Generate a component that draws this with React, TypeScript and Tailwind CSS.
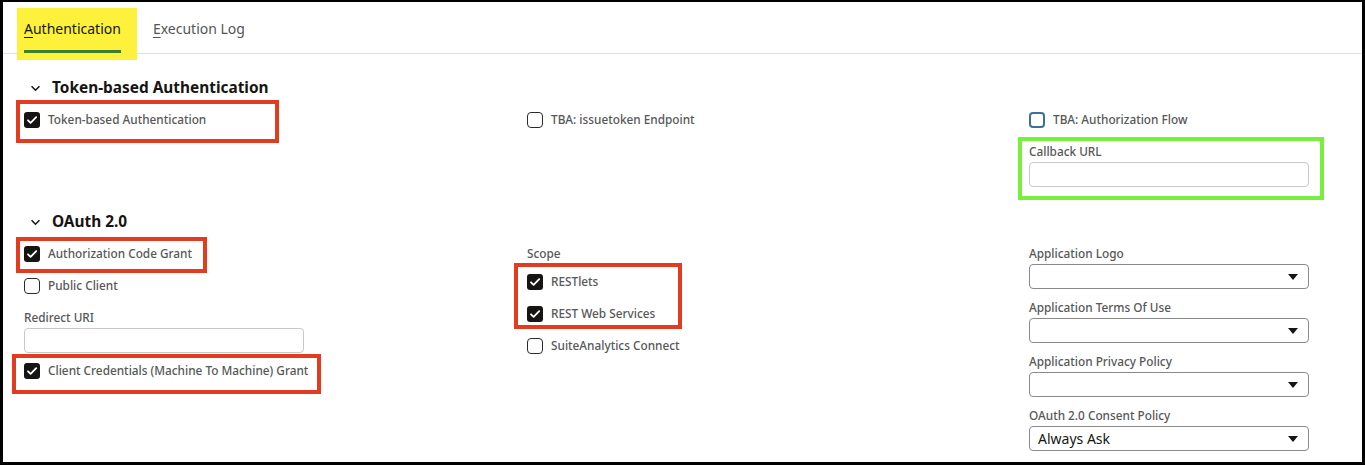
import type { ReactNode } from "react";

const Check = () => (
  <svg viewBox="0 0 16 16" className="w-[16px] h-[16px]">
    <rect x="0" y="0" width="16" height="16" rx="3" fill="#161513" />
    <path d="M4 8.3l2.6 2.6L12.2 5.2" fill="none" stroke="#fff" strokeWidth="1.8" strokeLinecap="round" strokeLinejoin="round" />
  </svg>
);

const Box = ({ checked, focus }: { checked?: boolean; focus?: boolean }) =>
  checked ? (
    <Check />
  ) : (
    <span
      className={
        focus
          ? "block w-[16px] h-[16px] rounded-[4px] border-[2px] border-[#3e7294]"
          : "block w-[16px] h-[16px] rounded-[4px] border-[1.5px] border-[#2a2a2a]"
      }
    />
  );

const CheckRow = ({ label, checked, focus, children }: { label: string; checked?: boolean; focus?: boolean; children?: ReactNode }) => (
  <div className="relative flex items-center h-[32px] gap-[8px]">
    <Box checked={checked} focus={focus} />
    <span className="text-[11.8px] text-[#575757] font-medium">{label}</span>
    {children}
  </div>
);

const Label = ({ children, className = "" }: { children: ReactNode; className?: string }) => (
  <div className={"h-[16px] leading-[16px] text-[11.8px] text-[#575757] font-medium " + className}>{children}</div>
);

const TextInput = () => <div className="w-[280px] h-[25px] rounded-[4px] border border-[#c9c9c9] mt-[3px]" />;

const Select = ({ value }: { value?: string }) => (
  <div className="w-[280px] h-[25px] rounded-[4px] border border-[#8a8a8a] mt-[3px] flex items-center justify-between pl-[8px] pr-[10px]">
    <span className="text-[14px] text-[#161513]">{value}</span>
    <svg viewBox="0 0 10 6" className="w-[10px] h-[6px]">
      <path d="M0 0h10L5 6z" fill="#161513" />
    </svg>
  </div>
);

const Chevron = () => (
  <svg viewBox="0 0 12 8" className="w-[11px] h-[7px]">
    <path d="M1.5 1.5L6 6l4.5-4.5" fill="none" stroke="#161513" strokeWidth="1.8" />
  </svg>
);

const Section = ({ title, className = "" }: { title: string; className?: string }) => (
  <div className={"flex items-center h-[24px] " + className}>
    <span className="ml-[6px] w-[22px] flex"><Chevron /></span>
    <span className="text-[15.4px] font-bold text-[#161513]">{title}</span>
  </div>
);

export default function App() {
  return (
    <div className="w-[1365px] h-[465px] bg-black pt-[2px] px-[3px] pb-[3px] font-['Noto_Sans',sans-serif]">
      <div className="bg-white h-full relative">
        <div className="flex h-[52px] border-b border-[#e0e0e0] pl-[21px] gap-[32px]">
          <div className="relative flex flex-col justify-center">
            <div className="absolute left-[-7px] top-[6px] w-[120px] h-[52px] bg-[#fdf13b]" />
            <span className="relative text-[14px] text-[#161513] mt-[2px]">
              <span className="underline underline-offset-[3px]">A</span>uthentication
            </span>
            <div className="absolute left-0 right-0 bottom-0 h-[3px] bg-[#3d7e2e]" />
          </div>
          <div className="flex flex-col justify-center">
            <span className="text-[14px] text-[#555555] mt-[2px]">
              <span className="underline underline-offset-[3px]">E</span>xecution Log
            </span>
          </div>
        </div>

        <div className="pl-[21px]">
          <Section title="Token-based Authentication" className="mt-[22px]" />
          <div className="grid grid-cols-[503px_502px_1fr] mt-[4px]">
            <div>
              <CheckRow label="Token-based Authentication" checked>
                <div className="absolute left-[-8px] top-[-4px] w-[263px] h-[43px] border-[4px] border-[#e33b1f]" />
              </CheckRow>
            </div>
            <div>
              <CheckRow label="TBA: issuetoken Endpoint" />
            </div>
            <div className="relative">
              <CheckRow label="TBA: Authorization Flow" focus />
              <Label className="mt-[7px]">Callback URL</Label>
              <TextInput />
              <div className="absolute left-[-11px] top-[33px] w-[306px] h-[63px] border-[4px] border-[#77f03d]" />
            </div>
          </div>

          <Section title="OAuth 2.0" className="mt-[23px]" />
          <div className="grid grid-cols-[503px_502px_1fr] mt-[4px]">
            <div>
              <CheckRow label="Authorization Code Grant" checked>
                <div className="absolute left-[-8px] top-[-1px] w-[191px] h-[36px] border-[4px] border-[#e33b1f]" />
              </CheckRow>
              <CheckRow label="Public Client" />
              <Label className="mt-[7px]">Redirect URI</Label>
              <TextInput />
              <div className="mt-[2px]">
                <CheckRow label="Client Credentials (Machine To Machine) Grant" checked>
                  <div className="absolute left-[-12px] top-[-1px] w-[309px] h-[40px] border-[4px] border-[#e33b1f]" />
                </CheckRow>
              </div>
            </div>
            <div>
              <Label className="mt-[7px]">Scope</Label>
              <div className="relative mt-[5px]">
                <CheckRow label="RESTlets" checked />
                <CheckRow label="REST Web Services" checked />
                <div className="absolute left-[-13px] top-[-3px] w-[168px] h-[66px] border-[4px] border-[#e33b1f]" />
              </div>
              <CheckRow label="SuiteAnalytics Connect" />
            </div>
            <div>
              <Label className="mt-[7px]">Application Logo</Label>
              <Select />
              <Label className="mt-[10px]">Application Terms Of Use</Label>
              <Select />
              <Label className="mt-[10px]">Application Privacy Policy</Label>
              <Select />
              <Label className="mt-[10px]">OAuth 2.0 Consent Policy</Label>
              <Select value="Always Ask" />
            </div>
          </div>
        </div>
      </div>
    </div>
  );
}
